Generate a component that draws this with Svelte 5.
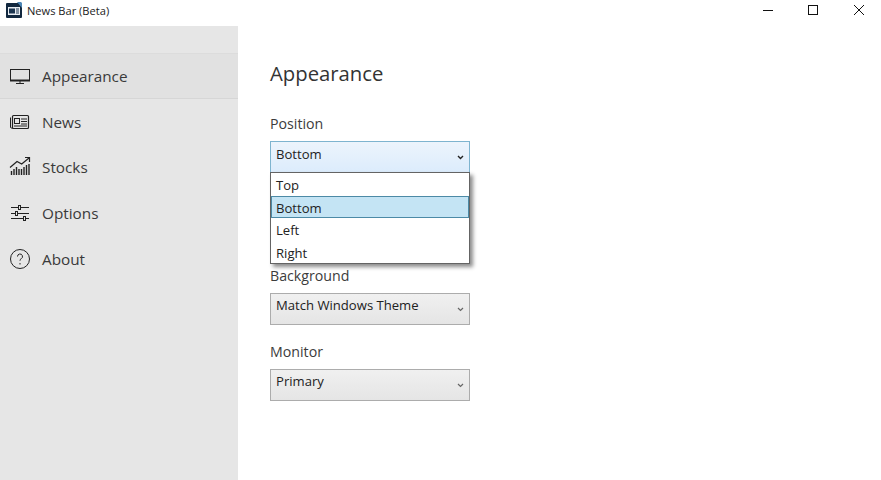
<script>
  let nav = ['Appearance', 'News', 'Stocks', 'Options', 'About'];
  let active = 'Appearance';
  let positions = ['Top', 'Bottom', 'Left', 'Right'];
  let position = 'Bottom';
</script>

<div class="window">
  <header class="titlebar">
    <svg class="appicon" width="16" height="16" viewBox="0 0 16 16">
      <rect x="0" y="1" width="16" height="15" rx="1" fill="#12283f" />
      <path d="M11 0h4l1 1v5z" fill="#4d86b5" />
      <rect x="2" y="5" width="12" height="8" fill="#e8edf2" />
      <rect x="3" y="6.500" width="6" height="5" fill="#1c3550" />
      <path d="M10 7h3M10 9h3M10 11h3" stroke="#1c3550" stroke-width="1" />
    </svg>
    <span class="apptitle">News Bar (Beta)</span>
    <div class="controls">
      <svg width="12" height="12" viewBox="0 0 12 12"><path d="M0 6.500h10" stroke="#111" stroke-width="1" /></svg>
      <svg width="12" height="12" viewBox="0 0 12 12"><rect x="0.500" y="1.500" width="9" height="9" fill="none" stroke="#111" /></svg>
      <svg width="12" height="12" viewBox="0 0 12 12"><path d="M1 1l10 10M11 1L1 11" stroke="#111" stroke-width="1" /></svg>
    </div>
  </header>

  <div class="body">
    <nav class="sidebar">
      {#each nav as item}
        <div class="navitem" class:active={item === active}>
          <svg width="22" height="22" viewBox="0 0 22 22" fill="none" stroke="#222" stroke-width="1">
            {#if item === 'Appearance'}
              <rect x="1.500" y="4.500" width="19" height="11" />
              <path d="M1 15.500h20" stroke-width="2" />
              <path d="M7 18.500h8M11 16v2" />
            {:else if item === 'News'}
              <rect x="3.500" y="4.500" width="16" height="13" rx="1" stroke-width="1.200" />
              <path d="M1.500 6.500v10l2 1" />
              <rect x="5.500" y="7.500" width="5" height="5" />
              <path d="M12 8h6M12 10.500h6M12 13h6M5 15h13" />
            {:else if item === 'Stocks'}
              <path d="M2.500 19v-4M5 19v-6M7.500 19v-8M10 19v-6M12.500 19v-6M15 19v-8M17.500 19v-10M20 19v-11" stroke-width="1.400" />
              <path d="M1 11.500l7-6 4.700 2.500 7.300-6" stroke-width="1.200" />
              <path d="M16 1.500h4.500v4.500" stroke-width="1.200" />
            {:else if item === 'Options'}
              <path d="M2 5.500h7M12 5.500h8M2 11.500h4M9 11.500h11M2 16.500h12M17 16.500h3" />
              <rect x="9.500" y="3.500" width="2" height="4" />
              <rect x="6.500" y="9.500" width="2" height="4" />
              <rect x="14.500" y="14.500" width="2" height="4" />
            {:else}
              <circle cx="11" cy="11" r="9.500" />
              <path d="M8.500 8.500a2.500 2.500 0 1 1 3.700 2.200c-.8.500-1.200 1-1.200 2" />
              <path d="M11 15v1.500" />
            {/if}
          </svg>
          <span>{item}</span>
        </div>
      {/each}
    </nav>

    <main class="content">
      <h1>Appearance</h1>

      <section class="field">
        <div class="label">Position</div>
        <div class="select open">
          <span>{position}</span>
          <svg class="chev" width="7" height="5" viewBox="0 0 7 5"><path d="M1 1l2.500 2.500L6 1" fill="none" stroke="#222" stroke-width="1.400" /></svg>
          <ul class="popup">
            {#each positions as p}
              <li class:picked={p === position}>{p}</li>
            {/each}
          </ul>
        </div>
      </section>

      <div class="field hidden-field"></div>

      <section class="field">
        <div class="label">Background</div>
        <div class="select">
          <span>Match Windows Theme</span>
          <svg class="chev" width="7" height="5" viewBox="0 0 7 5"><path d="M1 1l2.500 2.500L6 1" fill="none" stroke="#666" stroke-width="1.200" /></svg>
        </div>
      </section>

      <section class="field">
        <div class="label">Monitor</div>
        <div class="select">
          <span>Primary</span>
          <svg class="chev" width="7" height="5" viewBox="0 0 7 5"><path d="M1 1l2.500 2.500L6 1" fill="none" stroke="#666" stroke-width="1.200" /></svg>
        </div>
      </section>
    </main>
  </div>
</div>

<style>
  :global(body) {
    margin: 0;
    background: #fff;
    font-family: "Open Sans", "Noto Sans", "Liberation Sans", sans-serif;
    color: #333;
  }
  .window {
    width: 881px;
    height: 480px;
    display: flex;
    flex-direction: column;
    overflow: hidden;
  }
  .titlebar {
    height: 26px;
    flex: none;
    display: flex;
    align-items: flex-start;
    background: #fff;
  }
  .appicon {
    margin: 2px 0 0 6px;
  }
  .apptitle {
    margin: 3px 0 0 5px;
    font-size: 11.100px;
    line-height: 16px;
    color: #222;
  }
  .controls {
    margin: 4px 16px 0 auto;
    display: flex;
    gap: 33px;
  }
  .body {
    flex: 1;
    display: flex;
    min-height: 0;
  }
  .sidebar {
    width: 238px;
    flex: none;
    background: #e6e6e6;
    padding-top: 27px;
    box-sizing: border-box;
  }
  .navitem {
    height: 45.800px;
    box-sizing: border-box;
    display: flex;
    align-items: center;
    gap: 11px;
    padding-left: 9px;
    font-size: 15.300px;
    color: #3a3a3a;
  }
  .navitem.active {
    background: #e1e1e1;
    border-top: 1px solid #dcdcdc;
    border-bottom: 1px solid #d6d6d6;
  }
  .content {
    flex: 1;
    padding-left: 32px;
  }
  h1 {
    margin: 33px 0 0;
    font-size: 20.300px;
    font-weight: 400;
    line-height: 28px;
    height: 28px;
    color: #333;
  }
  .field {
    width: 200px;
    height: 76px;
  }
  h1 + .field {
    margin-top: 27px;
  }
  .hidden-field {
    visibility: hidden;
  }
  .label {
    font-size: 14.200px;
    line-height: 20px;
    height: 20px;
    color: #3c3c3c;
    margin-bottom: 7px;
  }
  .select {
    position: relative;
    height: 32px;
    box-sizing: border-box;
    border: 1px solid #acacac;
    background: linear-gradient(#f0f0f0, #e5e5e5);
    font-size: 13.100px;
    color: #222;
    padding: 1px 5px;
    line-height: 20px;
  }
  .select.open {
    border-color: #7eb4cf;
    background: linear-gradient(#ecf4fc, #dcecfc);
    padding-top: 2px;
  }
  .chev {
    position: absolute;
    right: 5px;
    top: 13px;
  }
  .popup {
    position: absolute;
    left: -1px;
    top: 30px;
    width: 200px;
    height: 92px;
    box-sizing: border-box;
    margin: 0;
    padding: 0;
    list-style: none;
    background: #fff;
    border: 1px solid #646464;
    box-shadow: 3px 3px 4px rgba(0, 0, 0, 0.45);
    z-index: 2;
  }
  .popup li {
    height: 22.500px;
    box-sizing: border-box;
    padding: 0 5px;
    line-height: 25px;
    font-size: 13.100px;
    color: #222;
  }
  .popup li.picked {
    background: #c4e4f4;
    outline: 1px solid #4c8aa6;
    outline-offset: -1px;
  }
</style>
